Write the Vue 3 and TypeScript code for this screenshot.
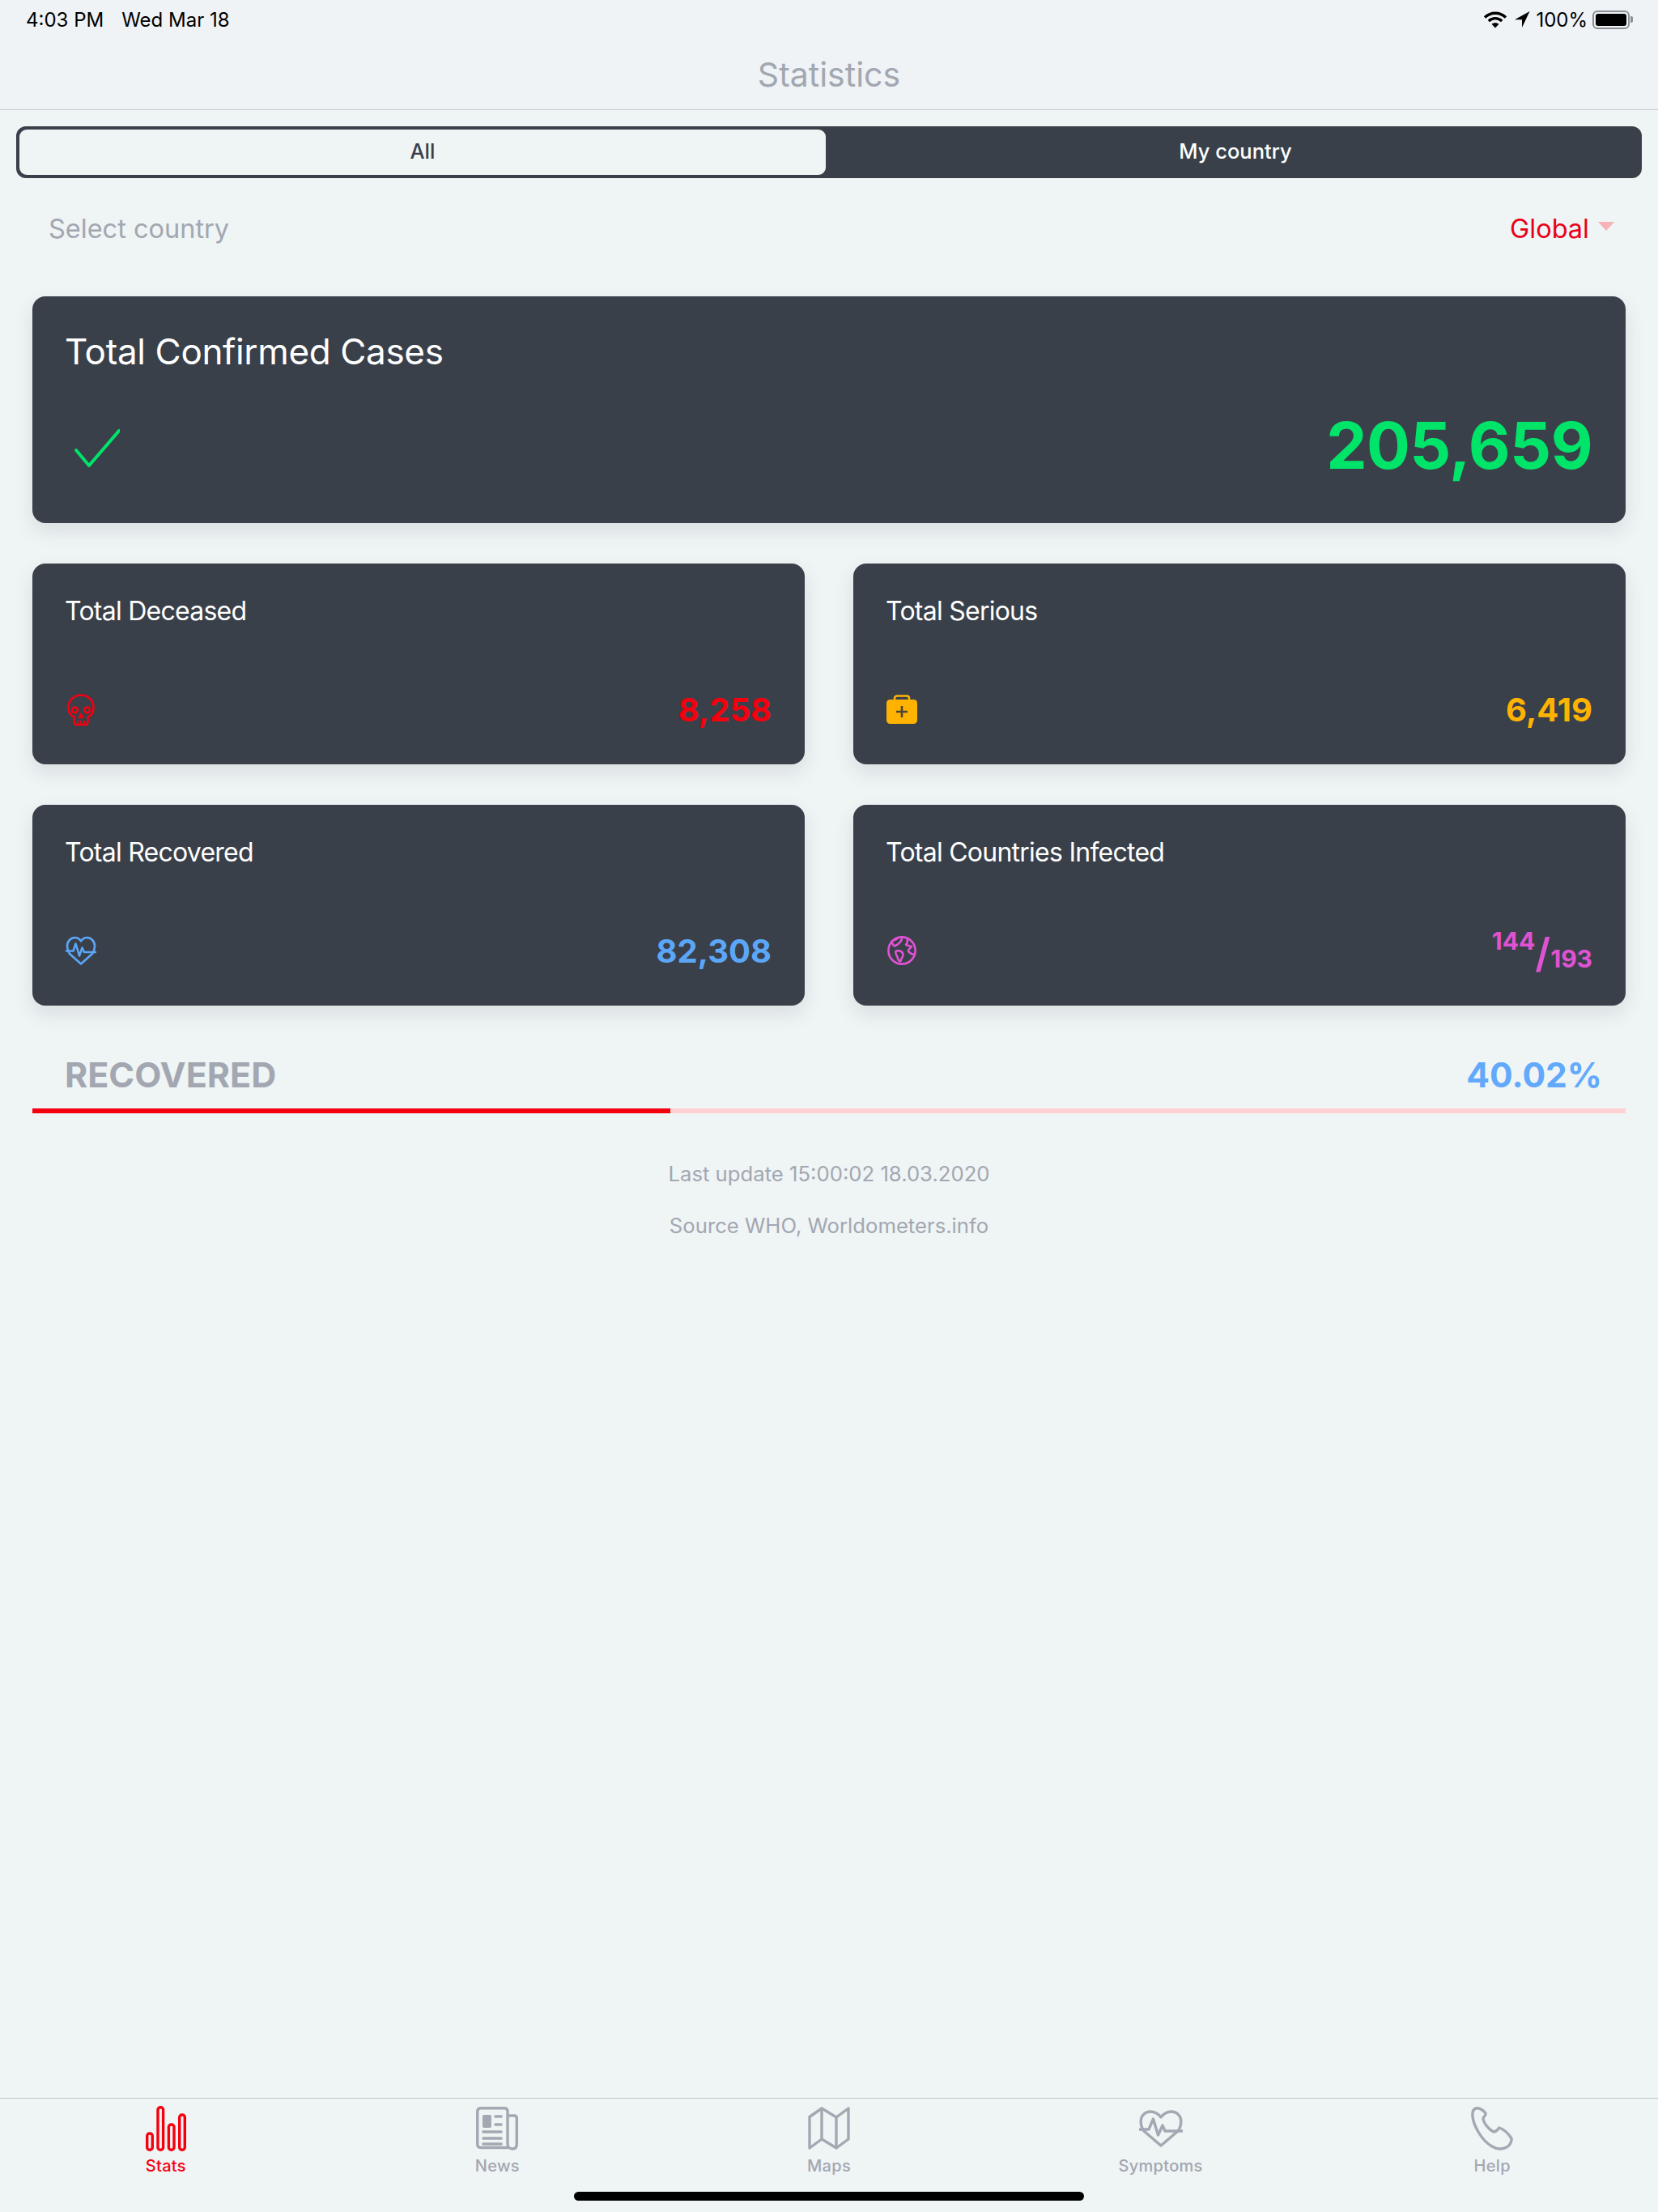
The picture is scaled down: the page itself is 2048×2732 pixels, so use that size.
<script setup lang="ts">
type Card = { title: string; value: string; color: string; icon: string };
const cards: Card[] = [
  { title: "Total Deceased", value: "8,258", color: "#f5000f", icon: "skull" },
  { title: "Total Serious", value: "6,419", color: "#ffb300", icon: "case" },
  { title: "Total Recovered", value: "82,308", color: "#5ca6f8", icon: "heart" },
  { title: "Total Countries Infected", value: "", color: "#e052d4", icon: "globe" },
];
const tabs = ["Stats", "News", "Maps", "Symptoms", "Help"];
const recovered = 40.02;
</script>

<template>
  <div class="page">
    <div class="status">
      <div class="status-left"><span>4:03 PM</span><span>Wed Mar 18</span></div>
      <div class="status-right">
        <svg width="30" height="22" viewBox="0 0 30 22" fill="none" stroke="#000" stroke-width="3.4">
          <path d="M2 8.5C9.5 1.5 20.5 1.5 28 8.5" />
          <path d="M6.8 13C11.8 8.6 18.2 8.6 23.2 13" />
          <path d="M15 21.5L10.6 16.8C13 14.8 17 14.8 19.4 16.8Z" fill="#000" stroke="none" />
        </svg>
        <svg width="20" height="22" viewBox="0 0 20 22"><path d="M19.5 1L1 11.2H10V21Z" fill="#000" /></svg>
        <span class="pct">100%</span>
        <div class="battery"><div class="battery-fill"></div></div>
        <div class="battery-cap"></div>
      </div>
    </div>
    <div class="nav">Statistics</div>

    <div class="segment">
      <div class="seg seg-on">All</div>
      <div class="seg seg-off">My country</div>
    </div>

    <div class="select-row">
      <span class="select-label">Select country</span>
      <span class="select-value">Global<i class="caret"></i></span>
    </div>

    <main class="content">
      <section class="card card-big">
        <div class="big-title">Total Confirmed Cases</div>
        <div class="card-foot">
          <svg class="check" width="56" height="47" viewBox="0 0 56 47" fill="none" stroke="#00e469" stroke-width="4" stroke-linecap="round" stroke-linejoin="round">
            <path d="M2 26L18 45L55 2" />
          </svg>
          <span class="big-value">205,659</span>
        </div>
      </section>

      <div class="grid">
        <section v-for="c in cards" :key="c.title" class="card card-small">
          <div class="small-title">{{ c.title }}</div>
          <div class="card-foot">
            <svg v-if="c.icon === 'skull'" class="ic ic-skull" width="34" height="40" viewBox="0 0 34 40" fill="none" :stroke="c.color" stroke-width="2.6" stroke-linejoin="round">
              <path d="M17 1.5C8 1.5 1.5 8 1.5 17C1.5 22.5 4 26.5 8.5 28.5V34C8.5 36.5 9.5 38 11.5 38H22.5C24.5 38 25.5 36.5 25.5 34V28.5C30 26.5 32.5 22.5 32.5 17C32.5 8 26 1.5 17 1.5Z" />
              <circle cx="9.5" cy="20" r="3.4" /><circle cx="24.5" cy="20" r="3.4" />
              <path d="M17 25L15 29H19Z" />
              <path d="M13 33V38M17 33V38M21 33V38" stroke-width="1.8" />
            </svg>
            <svg v-else-if="c.icon === 'case'" class="ic ic-case" width="38" height="36" viewBox="0 0 38 36">
              <path d="M10 8V4.5C10 2.5 11.5 1.5 13 1.5H25C26.5 1.5 28 2.5 28 4.5V8" fill="none" :stroke="c.color" stroke-width="2.6" />
              <rect x="0" y="6" width="38" height="30" rx="4.5" :fill="c.color" />
              <path d="M19 14V28M12 21H26" stroke="#4a4634" stroke-width="2.6" />
            </svg>
            <svg v-else-if="c.icon === 'heart'" class="ic ic-heart" width="38" height="36" viewBox="0 0 38 36" fill="none" :stroke="c.color" stroke-width="2.6" stroke-linejoin="round" stroke-linecap="round">
              <path d="M5 22C2.8 18.5 2 16 2 12.5C2 6.5 6.5 2 11.5 2C14.6 2 17.2 3.6 19 6.4C20.8 3.6 23.4 2 26.5 2C31.5 2 36 6.5 36 12.5C36 16 35.2 18.5 33 22L19 34.5Z" />
              <path d="M1 18.5H9.5L12.5 9.5L17 24.5L20.5 14.5L23 20H37" />
            </svg>
            <svg v-else class="ic ic-globe" width="38" height="38" viewBox="0 0 38 38" fill="none" :stroke="c.color" stroke-width="2.6" stroke-linejoin="round">
              <circle cx="19" cy="19" r="16.6" />
              <path d="M14 3C13 6 8 5.5 6 8.5C8 10.5 7.5 13 10.5 13.5C12.5 11.5 15.5 11.5 16 9C18.5 8.5 18 5.5 19.5 3" />
              <path d="M11.5 20C15 18 20 20 20.5 23.5C21 27 18 28.5 17.5 32C15.5 33 14 29.5 13.5 27C12.5 24.5 10.5 23 11.5 20Z" />
              <path d="M26 4.5C25 8 27 9.5 24 11.5C25.5 14 28.5 12 31 14C29 17 26.5 17 27 20C29 22 31.5 24.5 34.5 23.5" />
            </svg>
            <span v-if="c.value" class="small-value" :style="{ color: c.color }">{{ c.value }}</span>
            <span v-else class="fraction" :style="{ color: c.color }">
              <span class="num">144</span><span class="slash">/</span><span class="den">193</span>
            </span>
          </div>
        </section>
      </div>

      <div class="recovered-row">
        <span class="recovered-label">RECOVERED</span>
        <span class="recovered-value">{{ recovered.toFixed(2) }}%</span>
      </div>
      <div class="bar"><div class="bar-fill" :style="{ width: recovered + '%' }"></div></div>

      <p class="note note-first">Last update 15:00:02 18.03.2020</p>
      <p class="note">Source WHO, Worldometers.info</p>
    </main>

    <nav class="tabs">
      <div v-for="(t, i) in tabs" :key="t" class="tab" :class="{ active: i === 0 }">
        <div class="tab-icon">
          <svg v-if="t === 'Stats'" width="50" height="56" viewBox="0 0 50 56" fill="none" stroke="#f5000f" stroke-width="3.4">
            <rect x="1.7" y="34" width="6.6" height="20.3" rx="3" />
            <rect x="15" y="1.7" width="6.6" height="52.6" rx="3" />
            <rect x="28.4" y="23" width="6.6" height="31.3" rx="3" />
            <rect x="41.7" y="11" width="6.6" height="43.3" rx="3" />
          </svg>
          <svg v-else-if="t === 'News'" width="52" height="54" viewBox="0 0 52 54" fill="none" stroke="#a3a8b2" stroke-width="3.4" stroke-linecap="round">
            <path d="M39 50.5H6C3.5 50.5 1.7 49 1.7 46V6C1.7 3 3.5 1.7 6 1.7H35C37.5 1.7 39 3 39 6V46C39 49 41 52 45 52C48.5 52 50.3 49.5 50.3 46V14C50.3 12.5 49.5 11 47 11H40" />
            <rect x="8" y="10" width="11" height="16" rx="2" fill="#a3a8b2" stroke="none" />
            <path d="M24 12H31M24 22H31M9 31H31M9 39H31M9 46H31" stroke-width="3.6" />
          </svg>
          <svg v-else-if="t === 'Maps'" width="52" height="54" viewBox="0 0 52 54" fill="none" stroke="#a3a8b2" stroke-width="3.4" stroke-linejoin="round">
            <path d="M2 12.5V51L17 40L35 51L50 40V2L35 13L17 2L2 12.5Z" />
            <path d="M17 2V40M35 13V51" />
          </svg>
          <svg v-else-if="t === 'Symptoms'" width="54" height="46" viewBox="0 0 54 46" fill="none" stroke="#a3a8b2" stroke-width="3.4" stroke-linejoin="round" stroke-linecap="round">
            <path d="M6 26C3 22 2.2 18 2.2 14C2.2 7 7.5 2 14 2C19 2 23.5 4.5 27 9C30.5 4.5 35 2 40 2C46.5 2 51.8 7 51.8 14C51.8 18 51 22 48 26L27 44Z" />
            <path d="M1 24H12L17.5 11L23.5 31L29 19L32 26H53" />
          </svg>
          <svg v-else width="52" height="54" viewBox="0 0 52 54" fill="none" stroke="#a3a8b2" stroke-width="3.4" stroke-linejoin="round">
            <path d="M6 2C2.5 3 1.5 7 2 12C3 22 12 41 26 49C31 52 38 53 44 50C48 48 50.5 43 50 39C46 33 41 28 35 26C33 28 31 31 28 31C22 28 16 21 15 15C15 12 19 11 18 8C15 4 10 1 6 2Z" />
          </svg>
        </div>
        <span class="tab-label">{{ t }}</span>
      </div>
      <div class="home"></div>
    </nav>
  </div>
</template>

<style>
body { margin: 0; }
</style>

<style scoped>
.page {
  width: 2048px;
  height: 2732px;
  display: flex;
  flex-direction: column;
  background: #eff4f5;
  font-family: Inter, "Liberation Sans", sans-serif;
  color: #a2a7b1;
  overflow: hidden;
}
.status {
  height: 48px;
  padding: 0 31px 0 32px;
  display: flex;
  justify-content: space-between;
  align-items: center;
  color: #000;
  font-size: 24px;
  background: #eff3f6;
}
.status-left { display: flex; gap: 22px; }
.status-right { display: flex; align-items: center; }
.status-right svg + svg { margin-left: 8px; }
.pct { margin-left: 7px; margin-right: 6px; }
.battery {
  width: 46px;
  height: 23px;
  box-sizing: border-box;
  border: 2px solid #8b8f93;
  border-radius: 6px;
  padding: 2px;
}
.battery-fill { width: 100%; height: 100%; background: #000; border-radius: 3px; }
.battery-cap { width: 3px; height: 8px; background: #8b8f93; border-radius: 0 2px 2px 0; margin-left: 1px; }
.nav {
  height: 87px;
  border-bottom: 1px solid #c6cacc;
  display: flex;
  align-items: center;
  justify-content: center;
  font-size: 41px;
  background: #eff3f6;
}
.segment {
  margin: 20px 20px 0;
  height: 64px;
  box-sizing: border-box;
  display: flex;
  background: #394049;
  border: 4px solid #394049;
  border-radius: 12px;
  color: #fff;
  font-size: 25.5px;
  font-weight: 500;
  line-height: 54px;
}
.seg { flex: 1; display: flex; align-items: flex-start; justify-content: center; }
.seg-off { padding-left: 8px; }
.seg-on { flex: 0 0 996px; background: #eff4f5; color: #394049; border-radius: 9px; }
.select-row {
  height: 82px;
  margin-top: 21px;
  padding: 0 54px 0 60px;
  display: flex;
  align-items: center;
  justify-content: space-between;
  font-size: 32.5px;
}
.select-value { color: #ea001a; display: flex; align-items: center; }
.caret {
  margin-left: 11px;
  margin-bottom: 6px;
  width: 0;
  height: 0;
  border-left: 10px solid transparent;
  border-right: 10px solid transparent;
  border-top: 11px solid #f7b2b6;
}
.content { flex: 1; padding: 43px 40px 0; display: flex; flex-direction: column; }
.card {
  background: #394049;
  border-radius: 16px;
  box-shadow: 0 10px 24px rgba(57, 64, 73, 0.12);
  color: #fff;
  box-sizing: border-box;
  padding: 0 41px 0 40px;
  display: flex;
  flex-direction: column;
}
.card-big { height: 280px; }
.big-title { font-size: 44px; letter-spacing: -0.35px; margin-top: 40px; line-height: 56px; }
.card-foot { display: flex; align-items: center; justify-content: space-between; margin-top: auto; }
.check { margin-left: 12px; margin-top: 6px; }
.card-big .card-foot { margin-bottom: 48px; }
.big-value { font-size: 80px; letter-spacing: -0.6px; font-weight: 700; color: #00e469; line-height: 96px; }
.grid { display: grid; grid-template-columns: 954px 954px; justify-content: space-between; row-gap: 50px; margin-top: 50px; }
.card-small { height: 248px; }
.small-title { font-size: 32px; letter-spacing: -0.75px; margin-top: 38px; line-height: 42px; }
.card-small .card-foot { margin-bottom: 43px; height: 50px; }
.ic-skull { margin-left: 3px; margin-top: 2px; }
.ic-case { margin-left: 1px; }
.ic-heart { margin-left: 1px; }
.ic-globe { margin-left: 1px; }
.small-value { font-size: 40px; font-weight: 700; }
.fraction { display: flex; align-items: flex-start; font-weight: 700; font-size: 30px; height: 50px; }
.num { margin-top: -5px; }
.slash { font-size: 50px; font-weight: 600; line-height: 44px; margin-top: 6px; }
.den { margin-top: 17px; }
.recovered-row {
  display: flex;
  justify-content: space-between;
  align-items: baseline;
  padding: 0 29px 0 40px;
  margin-top: 55px;
  font-size: 43px;
  font-weight: 700;
  line-height: 60px;
}
.recovered-value { color: #62a9fb; font-size: 42.5px; }
.bar { height: 6px; background: #ffd1d3; margin-top: 11px; }
.bar-fill { height: 100%; background: #f5000f; }
.note { margin: 0; text-align: center; font-size: 25.7px; line-height: 32px; }
.note-first { margin-top: 59px; margin-bottom: 32px; }
.tabs {
  position: relative;
  height: 140px;
  border-top: 1px solid #c0c5c7;
  display: grid;
  grid-template-columns: repeat(5, 1fr);
  background: #eff4f5;
}
.tab { display: flex; flex-direction: column; align-items: center; }
.tab-icon { height: 66px; margin-top: 4px; display: flex; align-items: center; justify-content: center; }
.tab-label { font-size: 20px; font-weight: 500; letter-spacing: 0.3px; line-height: 24px; margin-top: 1px; }
.active .tab-label { color: #f5000f; }
.home {
  position: absolute;
  left: 709px;
  top: 115px;
  width: 630px;
  height: 11px;
  background: #000;
  border-radius: 6px;
}
</style>
